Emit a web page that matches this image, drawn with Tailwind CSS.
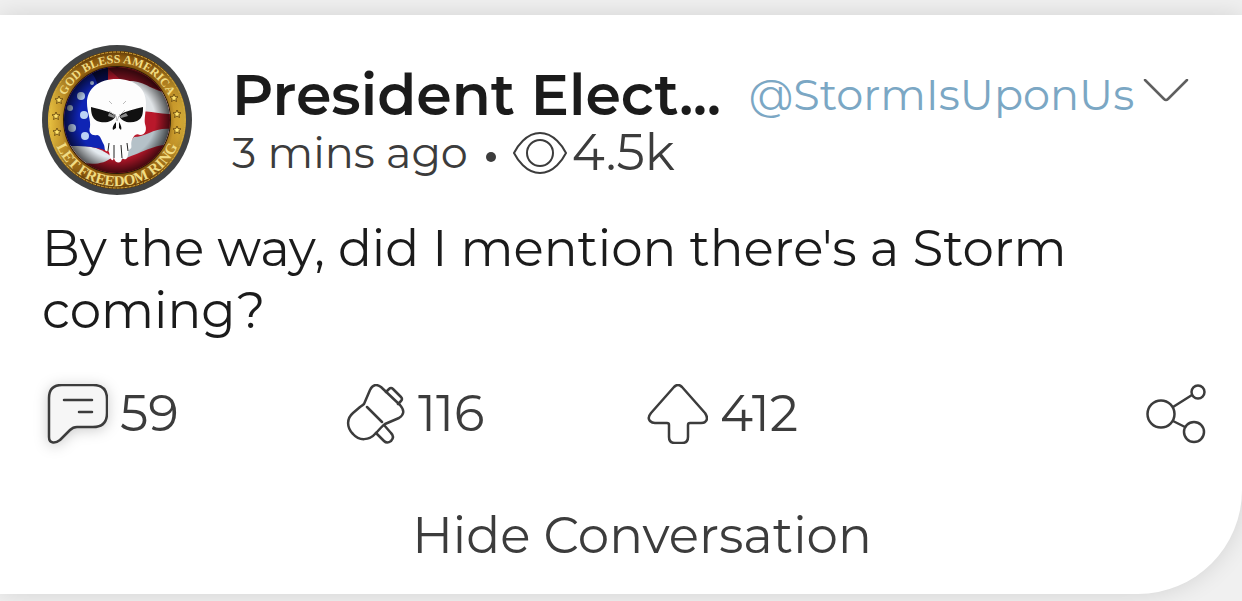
<!DOCTYPE html>
<html lang="en">
<head>
    <meta charset="UTF-8">
    <meta name="viewport" content="width=device-width, initial-scale=1.0">
    <title>Post</title>
    <script src="https://cdn.jsdelivr.net/npm/@tailwindcss/browser@4"></script>
</head>
<body class="min-h-screen overflow-hidden bg-[#f0f0f0] pt-[15px] font-['Montserrat','Inter',sans-serif] text-[#3c3c3c]">
    <article class="rounded-br-[104px] bg-white pt-[30px] pb-[26px] pl-[42px] shadow-[0_0_24px_rgba(0,0,0,0.12)]">
        <!-- Author -->
        <header class="flex items-start">
            <svg class="size-[150px] shrink-0" viewBox="0 0 150 150" role="img" aria-label="Profile picture">
                <defs>
                    <radialGradient id="gold" cx="50%" cy="50%" r="50%">
                        <stop offset="76%" stop-color="#7a4d0c"/>
                        <stop offset="84%" stop-color="#c98f22"/>
                        <stop offset="92%" stop-color="#a87016"/>
                        <stop offset="100%" stop-color="#4e320a"/>
                    </radialGradient>
                    <linearGradient id="shine" x1="0" x2="1" y1="0" y2="0">
                        <stop offset="0" stop-color="#ffd84a" stop-opacity="0.9"/>
                        <stop offset="0.25" stop-color="#6a3f06" stop-opacity="0.5"/>
                        <stop offset="0.75" stop-color="#6a3f06" stop-opacity="0.5"/>
                        <stop offset="1" stop-color="#ffd84a" stop-opacity="0.7"/>
                    </linearGradient>
                    <radialGradient id="shade" cx="50%" cy="50%" r="50%">
                        <stop offset="72%" stop-color="#000" stop-opacity="0"/>
                        <stop offset="100%" stop-color="#000" stop-opacity="0.65"/>
                    </radialGradient>
                    <clipPath id="inner"><circle cx="75" cy="75" r="53"/></clipPath>
                    <path id="topArc" d="M18 75A57 57 0 0 1 132 75"/>
                    <path id="bottomArc" d="M9 75A66 66 0 0 0 141 75"/>
                </defs>
                <circle cx="75" cy="75" r="75" fill="#414344"/>
                <circle cx="75" cy="75" r="69" fill="url(#gold)"/>
                <circle cx="75" cy="75" r="69" fill="url(#shine)"/>
                <circle cx="75" cy="75" r="68" fill="none" stroke="#d9aa3c" stroke-width="1" stroke-dasharray="3 1"/>
                <circle cx="75" cy="75" r="54" fill="#2b1b08"/>
                <g clip-path="url(#inner)">
                    <rect x="20" y="20" width="110" height="110" fill="#b9182b"/>
                    <path d="M62 20C84 22 112 30 120 46C104 38 96 44 80 36Z" fill="#7d1220"/>
                    <path d="M88 36C104 36 112 48 130 48V69C116 70 106 64 98 68Z" fill="#dfe3e6"/>
                    <path d="M92 92C104 92 112 82 130 84V100C112 98 98 110 74 116Z" fill="#b5c1c8"/>
                    <path d="M20 100C40 100 56 100 70 112C60 122 40 120 20 112Z" fill="#e4eaef"/>
                    <path d="M20 20H66V106C48 100 36 101 20 101Z" fill="#0f24b4"/>
                    <path d="M42 22C62 34 50 46 66 58V20Z" fill="#080d52"/>
                    <g fill="#bcd3f5">
                        <circle cx="28" cy="63" r="3"/><circle cx="39" cy="51" r="4"/>
                        <circle cx="42" cy="70" r="4"/><circle cx="30" cy="83" r="4"/>
                        <circle cx="43" cy="91" r="4"/><circle cx="50" cy="38" r="2"/>
                    </g>
                    <circle cx="75" cy="75" r="53" fill="url(#shade)"/>
                </g>
                <!-- Skull -->
                <path fill="#fdfdfd" d="M75 34C56 34 45 44 45 58C45 67 49 75 48 82C46 88 50 91 55 90C58 90 59 94 61 98C64 102 61 107 66 106C68 106 67 114 70 115C72 116 71 113 72 113C73 119 80 119 80 113C82 113 81 115 84 114C87 113 85 106 88 104C91 103 88 99 90 95C92 90 94 88 98 90C104 90 105 84 103 79C102 74 104 67 104 58C104 43 92 34 75 34Z"/>
                <path fill="#111" d="M49 62C56 64 66 66 74 70C72 77 62 79 55 76C50 73 49 68 49 62ZM101 62C93 64 84 66 77 70C79 77 88 79 95 76C101 73 101 68 101 62ZM74 77C71 80 70 83 71 85L74 83ZM77 77C79 80 80 83 79 85L77 83Z"/>
                <path fill="#8b8b8b" d="M67 68L73 71L72 73L66 71ZM84 68L78 71L79 73L86 71Z"/>
                <path fill="none" stroke="#bbb" stroke-width="1" d="M67 66L74 71L75 76L77 71L83 65M67 56L70 59M84 56L81 59"/>
                <path fill="none" stroke="#222" stroke-width="1" d="M66 106L67 98M72 113V100M80 113L79 100M86 106L85 98"/>
                <text class="font-['Liberation_Serif',serif] text-[12px] font-bold" fill="#f1dc83" text-anchor="middle"><textPath href="#topArc" startOffset="50%">GOD BLESS AMERICA</textPath></text>
                <text class="font-['Liberation_Serif',serif] text-[15px] font-bold" fill="#f1dc83" text-anchor="middle"><textPath href="#bottomArc" startOffset="50%">LET FREEDOM RING</textPath></text>
                <!-- Stars on the ring -->
                <defs>
                    <path id="star" d="M0-4L1.200-1.300L4-1.200L1.800 0.700L2.500 3.500L0 2L-2.500 3.500L-1.800 0.700L-4-1.200L-1.200-1.300Z"/>
                </defs>
                <g fill="#ffe36b" stroke="#5a3b08" stroke-width="0.800">
                    <use href="#star" x="17" y="55"/><use href="#star" x="14" y="71"/><use href="#star" x="15" y="87"/>
                    <use href="#star" x="132" y="53"/><use href="#star" x="135" y="69"/><use href="#star" x="135" y="85"/>
                </g>
            </svg>
            <div class="ml-10 min-w-0 flex-1 pt-5">
                <div class="flex items-center">
                    <h1 class="text-[57px] leading-[60px] font-semibold whitespace-nowrap text-[#1b1b1b]">President Elect...</h1>
                    <a href="#" class="ml-7 text-[43px] leading-[60px] whitespace-nowrap text-[#7ba7c4]">@StormIsUponUs</a>
                    <button type="button" aria-label="More options" class="mb-2 ml-2">
                        <svg class="h-6 w-12" viewBox="0 0 48 24" fill="none" stroke="#5f5f5f" stroke-width="2.500" stroke-linecap="round" stroke-linejoin="round"><path d="M3 1L22 20Q24 22 26 20L45 1"/></svg>
                    </button>
                </div>
                <div class="flex h-[56px] items-center leading-[50px] whitespace-nowrap">
                    <time class="text-[43px]">3 mins ago</time>
                    <span class="mt-2 ml-[18px] size-[10px] rounded-full bg-[#3c3c3c]"></span>
                    <svg class="ml-4 h-[42px] w-[56px]" viewBox="0 0 56 42" fill="none" stroke="#3c3c3c" stroke-width="2" role="img" aria-label="Views"><path d="M2 21C5 15 14 1 28 1S51 15 54 21C51 27 42 41 28 41S5 27 2 21Z"/><circle cx="28" cy="21" r="13"/></svg>
                    <span class="ml-1 text-[50px]">4.5k</span>
                </div>
            </div>
        </header>

        <p class="mt-[23px] mr-[80px] text-[50px] leading-[62px] text-[#1b1b1b]">By the way, did I mention there's a Storm coming?</p>

        <!-- Actions -->
        <div class="mt-[42px] grid grid-cols-4 text-[50px] leading-[60px]">
            <button type="button" aria-label="59 comments" class="flex items-center gap-3">
                <svg class="h-[60px] w-[66px] drop-shadow-[0_2px_7px_rgba(0,0,0,0.2)]" viewBox="0 0 66 60" fill="#f6f6f6" stroke="#3c3c3c" stroke-width="2.500" stroke-linecap="round" stroke-linejoin="round"><path d="M20 1H51Q65 1 65 15V29Q65 43 51 43H35Q31 43 28 46L18 56Q14 59 11 58.500Q7 58 7 53V14Q7 1 20 1Z"/><path d="M22 16H50M37 28H50"/></svg>
                <span>59</span>
            </button>
            <button type="button" aria-label="116 reposts" class="flex items-center gap-3">
                <svg class="h-[60px] w-[64px]" viewBox="0 0 64 60" fill="none" stroke="#3c3c3c" stroke-width="2.500" stroke-linecap="round" stroke-linejoin="round"><path d="M22 20L28 6Q32-2 39 3L58 21Q65 29 57 34L43 40C40 42 37 46 34 49C27 57 17 57 11 50C4 43 5 34 11 29L18 23Q21 21 22 20Z"/><path d="M25 23L40 38M44 8L47 5Q49 3 51 5L59 13Q61 15 59 17L56 20M34 49L42 57Q45 60 49 57Q53 53 49 49L42 41"/></svg>
                <span>116</span>
            </button>
            <button type="button" aria-label="412 upvotes" class="flex items-center gap-3">
                <svg class="h-[60px] w-[66px]" viewBox="0 0 66 60" fill="none" stroke="#3c3c3c" stroke-width="2.500" stroke-linecap="round" stroke-linejoin="round"><path d="M32 3Q36-1 40 3L63 29Q67 35 63 38Q62 39 59 39H48Q46 39 46 41V53Q46 59 40 59H33Q27 59 27 53V41Q27 39 25 39H13Q10 39 8 37Q5 34 9 29Z"/></svg>
                <span>412</span>
            </button>
            <button type="button" aria-label="Share" class="mr-9 justify-self-end">
                <svg class="size-[60px]" viewBox="0 0 60 60" fill="none" stroke="#3c3c3c" stroke-width="2.500"><circle cx="15" cy="30" r="13.500"/><circle cx="52" cy="8" r="6.500"/><circle cx="48" cy="48" r="10"/><path d="M27 23L46 11M27 37L39 43"/></svg>
            </button>
        </div>

        <button type="button" class="mt-[60px] block w-full text-center text-[50px] leading-[64px]">Hide Conversation</button>
    </article>
</body>
</html>
